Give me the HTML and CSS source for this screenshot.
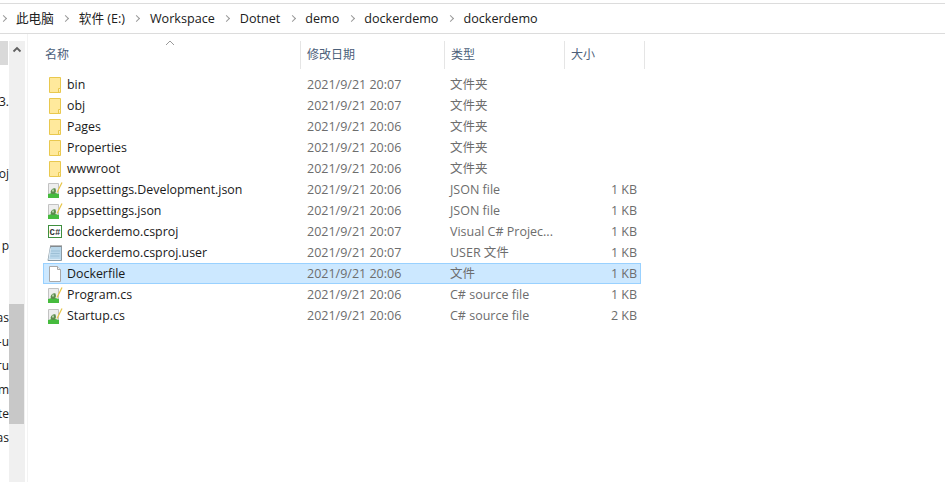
FILE: index.html
```html
<!DOCTYPE html>
<html lang="zh-CN">
<head>
<meta charset="utf-8">
<title>dockerdemo</title>
<link rel="stylesheet" href="styles.css">
</head>
<body>
<svg class="defs" width="0" height="0" aria-hidden="true">
  <symbol id="folder" viewBox="0 0 16 18">
    <path d="M2.500 1.500h11v15h-11z" fill="#ffe99c" stroke="#e9c84e"/>
    <path d="M11.500 16.500v-4h2" fill="#fff3c4" stroke="#e9c84e"/>
  </symbol>
  <symbol id="source" viewBox="0 0 16 18">
    <path d="M1.500 2.500h10v14h-10z" fill="#eeeeee" stroke="#c2c2c2"/>
    <path d="M1 13c3-1.500 8-1.500 11 0v4H1z" fill="#46bb3e"/>
    <path d="M3.500 11c.5-2.500 3-4.500 5-3.500l.5 2.500-1 3H4.500z" fill="#5d8c4d"/>
    <path d="M5 8.500h2v2H5z" fill="#b4cfa8"/>
    <path d="M10 11.500L15 1.500" stroke="#e6c64a" stroke-width="1.300" fill="none"/>
  </symbol>
  <symbol id="csharp" viewBox="0 0 16 18">
    <rect x="1.500" y="2.500" width="13" height="12" fill="#fff" stroke="#3f8f3f"/>
    <text x="8" y="11.500" class="cs-text">C#</text>
  </symbol>
  <symbol id="notes" viewBox="0 0 16 18">
    <path d="M3.500 2.500h11v14h-13.500z" fill="#b9d7ea" stroke="#8c9ca6"/>
    <path d="M3.500 4.500l-1.600 11h11.400" fill="none" stroke="#dcebf5"/>
    <path d="M4 7h9M3.700 9.500h9M3.400 12h9" stroke="#9dc0d6" fill="none"/>
    <path d="M4 1v2M6 1v2M8 1v2M10 1v2M12 1v2M14 1v2" stroke="#777" fill="none"/>
  </symbol>
  <symbol id="blank" viewBox="0 0 16 18">
    <path d="M2.500 1.500h8l3 3v12h-11z" fill="#fff" stroke="#a8a8a8"/>
    <path d="M10.500 1.500v3h3" fill="#f0f0f0" stroke="#a8a8a8"/>
  </symbol>
</svg>

<nav class="address">
  <span class="sep"></span><span class="crumb">此电脑</span>
  <span class="sep"></span><span class="crumb">软件 (E:)</span>
  <span class="sep"></span><span class="crumb">Workspace</span>
  <span class="sep"></span><span class="crumb">Dotnet</span>
  <span class="sep"></span><span class="crumb">demo</span>
  <span class="sep"></span><span class="crumb">dockerdemo</span>
  <span class="sep"></span><span class="crumb">dockerdemo</span>
</nav>

<main class="explorer">
  <aside class="tree">
    <div class="tree-row tree-active"></div>
    <div class="tree-row"></div>
    <div class="tree-row">3.</div>
    <div class="tree-row"></div>
    <div class="tree-row"></div>
    <div class="tree-row">oj</div>
    <div class="tree-row"></div>
    <div class="tree-row"></div>
    <div class="tree-row">p</div>
    <div class="tree-row"></div>
    <div class="tree-row"></div>
    <div class="tree-row">as</div>
    <div class="tree-row">-u</div>
    <div class="tree-row">ru</div>
    <div class="tree-row">m</div>
    <div class="tree-row">te</div>
    <div class="tree-row">as</div>
  </aside>
  <div class="scrollbar">
    <svg class="scroll-up" width="10" height="7" viewBox="0 0 10 7"><path d="M1.500 5.500L5 2l3.500 3.500" fill="none" stroke="#606060" stroke-width="1.800"/></svg>
    <div class="scroll-thumb"></div>
  </div>
  <section class="list">
    <div class="header">
      <div class="head-cell head-name">名称
        <svg class="sort" width="10" height="6" viewBox="0 0 10 6"><path d="M1 5l4-4 4 4" fill="none" stroke="#9a9a9a"/></svg>
      </div>
      <div class="head-cell">修改日期</div>
      <div class="head-cell">类型</div>
      <div class="head-cell">大小</div>
    </div>
    <div class="rows">
      <div class="row"><span class="name"><svg class="icon"><use href="#folder"/></svg>bin</span><span class="meta">2021/9/21 20:07</span><span class="meta">文件夹</span><span class="size"></span></div>
      <div class="row"><span class="name"><svg class="icon"><use href="#folder"/></svg>obj</span><span class="meta">2021/9/21 20:07</span><span class="meta">文件夹</span><span class="size"></span></div>
      <div class="row"><span class="name"><svg class="icon"><use href="#folder"/></svg>Pages</span><span class="meta">2021/9/21 20:06</span><span class="meta">文件夹</span><span class="size"></span></div>
      <div class="row"><span class="name"><svg class="icon"><use href="#folder"/></svg>Properties</span><span class="meta">2021/9/21 20:06</span><span class="meta">文件夹</span><span class="size"></span></div>
      <div class="row"><span class="name"><svg class="icon"><use href="#folder"/></svg>wwwroot</span><span class="meta">2021/9/21 20:06</span><span class="meta">文件夹</span><span class="size"></span></div>
      <div class="row"><span class="name"><svg class="icon"><use href="#source"/></svg>appsettings.Development.json</span><span class="meta">2021/9/21 20:06</span><span class="meta">JSON file</span><span class="size">1 KB</span></div>
      <div class="row"><span class="name"><svg class="icon"><use href="#source"/></svg>appsettings.json</span><span class="meta">2021/9/21 20:06</span><span class="meta">JSON file</span><span class="size">1 KB</span></div>
      <div class="row"><span class="name"><svg class="icon"><use href="#csharp"/></svg>dockerdemo.csproj</span><span class="meta">2021/9/21 20:07</span><span class="meta">Visual C# Projec...</span><span class="size">1 KB</span></div>
      <div class="row"><span class="name"><svg class="icon"><use href="#notes"/></svg>dockerdemo.csproj.user</span><span class="meta">2021/9/21 20:07</span><span class="meta">USER 文件</span><span class="size">1 KB</span></div>
      <div class="row selected"><span class="name"><svg class="icon"><use href="#blank"/></svg>Dockerfile</span><span class="meta">2021/9/21 20:06</span><span class="meta">文件</span><span class="size">1 KB</span></div>
      <div class="row"><span class="name"><svg class="icon"><use href="#source"/></svg>Program.cs</span><span class="meta">2021/9/21 20:06</span><span class="meta">C# source file</span><span class="size">1 KB</span></div>
      <div class="row"><span class="name"><svg class="icon"><use href="#source"/></svg>Startup.cs</span><span class="meta">2021/9/21 20:06</span><span class="meta">C# source file</span><span class="size">2 KB</span></div>
    </div>
  </section>
</main>
</body>
</html>
```
FILE: styles.css
```css
* { box-sizing: border-box; }
html, body { margin: 0; height: 100%; overflow: hidden; }
body {
  background: #fff;
  color: #1a1a1a;
  font-family: "Open Sans", "Noto Sans CJK SC", sans-serif;
  font-size: 12.400px;
  padding-top: 3px;
}
.defs { display: block; height: 0; }

.address {
  display: flex;
  align-items: center;
  gap: 9.500px;
  height: 31px;
  border-top: 1px solid #dcdcdc;
  border-bottom: 1px solid #dcdcdc;
  color: #202020;
  font-size: 12.600px;
  white-space: nowrap;
  padding-left: 1.500px;
}
.sep {
  width: 5px;
  height: 5px;
  border-top: 1.500px solid #999;
  border-right: 1.500px solid #999;
  transform: rotate(45deg);
  margin-right: 1px;
  margin-left: -1px;
}
.crumb { line-height: 29px; }
.crumb:not(:last-child) { margin-right: 1px; }

.explorer {
  display: flex;
  height: 448px;
}
.tree {
  width: 9px;
  padding-top: 7px;
  overflow: hidden;
  flex: none;
}
.tree-row {
  width: 9px;
  height: 24px;
  line-height: 25px;
  font-size: 12px;
  display: flex;
  justify-content: flex-end;
  white-space: nowrap;
  overflow: hidden;
}
.tree-active { background: #d9d9d9; width: 8px; }

.scrollbar {
  width: 16px;
  flex: none;
  background: #f0f0f0;
  position: relative;
  margin-top: 7px;
}
.scroll-up { display: block; margin: 5px auto 0; }
.scroll-thumb {
  position: absolute;
  left: 0;
  right: 1px;
  top: 263px;
  height: 120px;
  background: #c8c8c8;
}

.list {
  flex: 1;
  margin-left: 2px;
  border-left: 1px solid #f3f3f3;
  padding-left: 15px;
  padding-top: 7px;
}
.header {
  display: grid;
  grid-template-columns: 258px 144px 120px 80px;
  height: 27px;
}
.head-cell {
  position: relative;
  border-right: 1px solid #e5e5e5;
  color: #4c607a;
  font-size: 12px;
  padding-left: 6px;
  line-height: 28px;
}
.head-name { padding-left: 2px; }
.sort { position: absolute; left: 122px; top: -1px; }

.rows { padding-top: 6px; }
.row {
  display: grid;
  grid-template-columns: 257px 143px 120px 73px;
  height: 21px;
  line-height: 20px;
  align-items: center;
  border: 1px solid transparent;
  width: 598px;
}
.selected { background: #cce8ff; border-color: #99d1ff; }
.name {
  display: flex;
  align-items: center;
  gap: 4px;
  padding-left: 3px;
  color: #1a1a1a;
  white-space: nowrap;
}
.icon { width: 16px; height: 18px; flex: none; }
.meta {
  color: #6d6d6d;
  padding-left: 6px;
  font-size: 12.500px;
  white-space: nowrap;
}
.size {
  color: #6d6d6d;
  text-align: right;
  font-size: 12.500px;
}
.cs-text {
  font-family: "Liberation Mono", monospace;
  font-size: 9px;
  font-weight: bold;
  text-anchor: middle;
  fill: #333;
}
```
